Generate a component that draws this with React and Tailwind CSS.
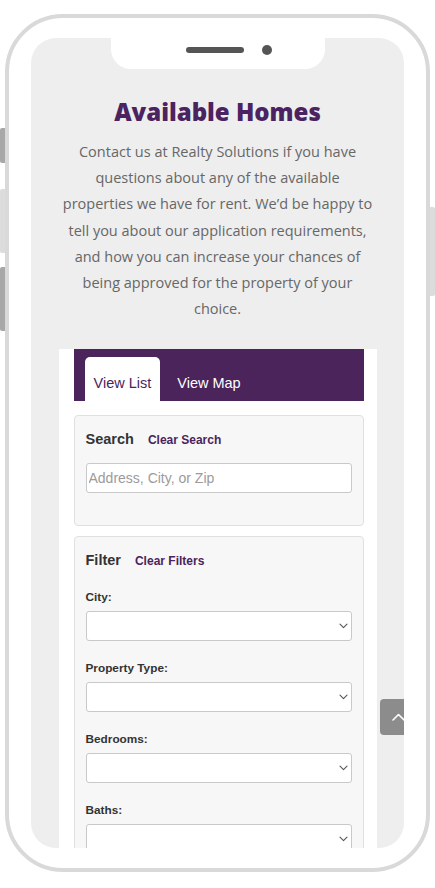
import React from "react";

function Chevron() {
  return (
    <svg width="9" height="6" viewBox="0 0 9 6" fill="none">
      <path d="M1 1.2 L4.5 4.6 L8 1.2" stroke="#555" strokeWidth="1.1" strokeLinecap="round" strokeLinejoin="round" />
    </svg>
  );
}

function SelectBox() {
  return (
    <div className="mt-[6px] h-[30px] w-full rounded-[3px] border border-[#c9c9c9] bg-white flex items-center justify-end pr-[3px]">
      <Chevron />
    </div>
  );
}

function Field({ label }) {
  return (
    <div>
      <div className="mt-[19px] h-[16px] leading-[16px] text-[11.8px] font-bold text-[#333]">{label}</div>
      <SelectBox />
    </div>
  );
}

export default function App() {
  return (
    <div className="relative w-[435px] h-[888px] bg-white overflow-hidden pt-[14px] pl-[5px] font-['Liberation_Sans',Arial,sans-serif]">
      {/* side buttons */}
      <div className="absolute left-0 top-[128px] w-[5px] h-[35px] rounded-l-[2px] bg-[#a8a8a8]" />
      <div className="absolute left-0 top-[189px] w-[5px] h-[64px] rounded-l-[2px] bg-[#dcdcdc]" />
      <div className="absolute left-0 top-[267px] w-[5px] h-[64px] rounded-l-[2px] bg-[#a8a8a8]" />
      <div className="absolute left-[430px] top-[207px] w-[5px] h-[89px] rounded-r-[2px] bg-[#dcdcdc]" />

      {/* phone frame */}
      <div className="w-[425px] h-[858px] rounded-[58px] border-[4px] border-[#d9d9d9] bg-white pt-[20px] px-[22px]">
        {/* screen */}
        <div className="relative w-[373px] h-[810px] rounded-[25px] bg-[#eeeeee] overflow-hidden flex flex-col items-center">
          {/* notch */}
          <div className="absolute left-[80px] top-0 w-[214px] h-[31px] bg-white rounded-b-[20px]">
            <div className="h-[24px] flex items-center pl-[75px]">
              <div className="w-[58px] h-[6px] rounded-full bg-[#555]" />
              <div className="ml-[18px] w-[10px] h-[10px] rounded-full bg-[#555]" />
            </div>
          </div>

          <h1 className="mt-[58px] text-[24px] leading-[32px] font-extrabold text-[#4b2360] font-['Open_Sans',sans-serif] whitespace-nowrap">
            Available Homes
          </h1>
          <p className="mt-[11px] text-center text-[14.5px] leading-[26.2px] text-[#676767] font-['Open_Sans',sans-serif] whitespace-nowrap">
            Contact us at Realty Solutions if you have
            <br />
            questions about any of the available
            <br />
            properties we have for rent. We’d be happy to
            <br />
            tell you about our application requirements,
            <br />
            and how you can increase your chances of
            <br />
            being approved for the property of your
            <br />
            choice.
          </p>

          {/* white content column */}
          <div className="mt-[27px] w-[318px] flex-1 bg-white pl-[15px] pr-[13px]">
            {/* tabs */}
            <div className="h-[52px] bg-[#4b245c] flex items-end pl-[11px]">
              <div className="h-[44px] px-[9px] pt-[18px] bg-white rounded-t-[5px] text-[14.5px] leading-[16px] text-[#4b245c]">
                View List
              </div>
              <div className="ml-[8px] h-[44px] px-[9px] pt-[18px] text-[14.5px] leading-[16px] text-white">
                View Map
              </div>
            </div>

            {/* search card */}
            <div className="mt-[14px] rounded-[4px] border border-[#e0e0e0] bg-[#f7f7f7] px-[11px] pt-[13px] pb-[32px]">
              <div className="flex items-baseline gap-[14px] h-[20px] leading-[20px]">
                <span className="text-[14.5px] font-bold text-[#333]">Search</span>
                <span className="text-[12px] font-bold text-[#4b245c]">Clear Search</span>
              </div>
              <input
                type="text"
                placeholder="Address, City, or Zip"
                className="mt-[14px] h-[30px] w-full rounded-[3px] border border-[#c9c9c9] bg-white px-[2px] text-[14px] text-[#333] placeholder:text-[#9b9b9b] outline-none font-['Liberation_Sans',Arial,sans-serif]"
              />
            </div>

            {/* filter card */}
            <div className="mt-[10px] rounded-[4px] border border-[#e0e0e0] bg-[#f7f7f7] px-[11px] pt-[13px] pb-[20px]">
              <div className="flex items-baseline gap-[14px] h-[20px] leading-[20px]">
                <span className="text-[14.5px] font-bold text-[#333]">Filter</span>
                <span className="text-[12px] font-bold text-[#4b245c]">Clear Filters</span>
              </div>
              <Field label="City:" />
              <Field label="Property Type:" />
              <Field label="Bedrooms:" />
              <Field label="Baths:" />
            </div>
          </div>

          {/* scroll to top button */}
          <div className="absolute left-[349px] top-[661px] w-[40px] h-[36px] rounded-[4px] bg-[#8c8c8c] flex items-center pl-[12px]">
            <svg width="13" height="8" viewBox="0 0 13 8" fill="none">
              <path d="M1 7 L6.5 1.5 L12 7" stroke="#fff" strokeWidth="1.6" strokeLinecap="round" strokeLinejoin="round" />
            </svg>
          </div>
        </div>
      </div>
    </div>
  );
}
